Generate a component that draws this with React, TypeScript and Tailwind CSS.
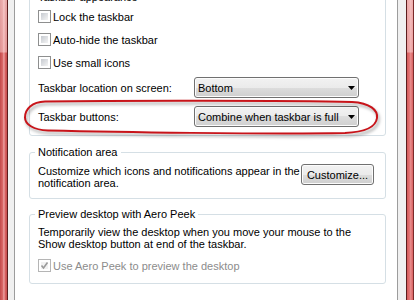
import React from "react";

function Check({ disabled = false, checked = false }: { disabled?: boolean; checked?: boolean }) {
  return (
    <div
      className={
        disabled
          ? "relative flex h-[13px] w-[13px] shrink-0 items-center justify-center border border-[#b5b5b5] bg-white p-[2px]"
          : "relative flex h-[13px] w-[13px] shrink-0 items-center justify-center border border-[#8e8f8f] bg-white p-[2px]"
      }
    >
      <div
        className={
          disabled
            ? "h-full w-full bg-[#f2f2f2]"
            : "h-full w-full bg-[linear-gradient(135deg,#c6cad0,#f4f4f4)]"
        }
      />
      {checked && (
        <svg className="absolute left-[1px] top-[1px]" width="9" height="9" viewBox="0 0 9 9">
          <path d="M1.5 4.5 L3.5 7 L7.5 1.5" fill="none" stroke={disabled ? "#9a9a9a" : "#333"} strokeWidth="1.6" />
        </svg>
      )}
    </div>
  );
}

function Arrow() {
  return (
    <svg width="7" height="4" viewBox="0 0 7 4" className="shrink-0">
      <path d="M0 0H7L3.5 4Z" fill="#000" />
    </svg>
  );
}

function Combo({ value }: { value: string }) {
  return (
    <div className="flex h-[21px] w-[165px] shrink-0 items-center justify-between rounded-[3px] border border-[#707070] bg-[linear-gradient(#f2f2f2,#ebebeb_50%,#dddddd_50%,#cfcfcf)] pl-[3px] pr-[3px] shadow-[inset_0_0_0_1px_#fcfcfc]">
      <span className="leading-[12px]">{value}</span>
      <Arrow />
    </div>
  );
}

function CheckRow({ label }: { label: string }) {
  return (
    <div className="flex h-[13px] items-center gap-[2px]">
      <Check />
      <span className="leading-[12px]">{label}</span>
    </div>
  );
}

export default function App() {
  return (
    <div className="relative flex h-[300px] w-[414px] overflow-hidden bg-white font-['Liberation_Sans',Arial,sans-serif] text-[11px] leading-[12px] text-black">
      {/* left window frame */}
      <div className="h-full w-[7px] shrink-0 bg-[linear-gradient(to_bottom,rgba(255,235,235,0.55)_0px,rgba(255,230,230,0.45)_52px,transparent_53px),linear-gradient(to_right,#c24a4a,#d86464_35%,#eba0a0_55%,#d45a5a_80%,#c44e4e)]" />
      <div className="h-full w-[1px] shrink-0 bg-[#5c1c1c]" />
      <div className="h-full w-[6px] shrink-0 bg-[#f0f0f0]" />
      <div className="h-full w-[1px] shrink-0 bg-[#9c9c9c]" />

      {/* white panel */}
      <div className="flex h-full w-[382px] shrink-0 flex-col bg-white">
        <fieldset className="ml-[14px] mr-[11px] mt-[-10px] rounded-[3px] border border-[#d5dfe5] pb-[8px] pl-[8px] pt-[6px]">
          <legend className="ml-[-3px] px-[3px] leading-[14px]">Taskbar appearance</legend>
          <CheckRow label="Lock the taskbar" />
          <div className="mt-[10px]">
            <CheckRow label="Auto-hide the taskbar" />
          </div>
          <div className="mt-[10px]">
            <CheckRow label="Use small icons" />
          </div>
          <div className="mt-[8px] flex items-center">
            <span className="w-[156px]">Taskbar location on screen:</span>
            <Combo value="Bottom" />
          </div>
          <div className="mt-[8px] flex items-center">
            <span className="w-[156px]">Taskbar buttons:</span>
            <Combo value="Combine when taskbar is full" />
          </div>
        </fieldset>

        <fieldset className="ml-[14px] mr-[11px] mt-[9px] rounded-[3px] border border-[#d5dfe5] pb-[9px] pl-[8px] pt-[5px]">
          <legend className="ml-[-3px] px-[3px] leading-[14px]">Notification area</legend>
          <div className="flex items-start">
            <p className="mt-[1px] flex-1 leading-[12px]">
              Customize which icons and notifications appear in the
              <br />
              notification area.
            </p>
            <div className="mr-[11px] flex h-[21px] w-[73px] items-center justify-center rounded-[3px] border border-[#707070] bg-[linear-gradient(#f2f2f2,#ebebeb_50%,#dddddd_50%,#cfcfcf)] shadow-[inset_0_0_0_1px_#fcfcfc]">
              Customize...
            </div>
          </div>
        </fieldset>

        <fieldset className="ml-[14px] mr-[11px] mt-[8px] rounded-[3px] border border-[#d5dfe5] pb-[11px] pl-[8px] pt-[5px]">
          <legend className="ml-[-3px] px-[3px] leading-[14px]">Preview desktop with Aero Peek</legend>
          <p className="leading-[12px]">
            Temporarily view the desktop when you move your mouse to the
            <br />
            Show desktop button at end of the taskbar.
          </p>
          <div className="mt-[9px] flex h-[13px] items-center gap-[2px]">
            <Check disabled checked />
            <span className="text-[#8c8c8c]">Use Aero Peek to preview the desktop</span>
          </div>
        </fieldset>
      </div>

      {/* right window frame */}
      <div className="h-full w-[1px] shrink-0 bg-[#9c9c9c]" />
      <div className="h-full w-[8px] shrink-0 bg-[#f0f0f0]" />
      <div className="h-full w-[1px] shrink-0 bg-[#5c1c1c]" />
      <div className="h-full w-[6px] shrink-0 bg-[linear-gradient(to_bottom,rgba(255,235,235,0.55)_0px,rgba(255,230,230,0.45)_52px,transparent_53px),linear-gradient(to_right,#d45a5a,#e27272_40%,#e88a8a_60%,#d86060)]" />
      <div className="h-full w-[1px] shrink-0 bg-[#7a2a2a]" />

      {/* red annotation ellipse */}
      <svg className="pointer-events-none absolute left-0 top-0" width="414" height="300" viewBox="0 0 414 300">
        <defs>
          <filter id="sh" x="-10%" y="-50%" width="120%" height="200%">
            <feGaussianBlur stdDeviation="1.6" />
          </filter>
        </defs>
        <path
          d="M45 101.5 C120 100.5 290 100.5 352 102 C370 103 378 110 377 118 C376 126 366 132 345 133 C270 134.5 110 132 48 130.5 C33 130 25 124 25 117.5 C25 109 32 102 45 101.5 Z"
          fill="none"
          stroke="rgba(0,0,0,0.28)"
          strokeWidth="2.5"
          filter="url(#sh)"
          transform="translate(1.5 2.5)"
        />
        <path
          d="M45 101.5 C120 100.5 290 100.5 352 102 C370 103 378 110 377 118 C376 126 366 132 345 133 C270 134.5 110 132 48 130.5 C33 130 25 124 25 117.5 C25 109 32 102 45 101.5 Z"
          fill="none"
          stroke="#c8141a"
          strokeWidth="2"
        />
      </svg>
    </div>
  );
}
